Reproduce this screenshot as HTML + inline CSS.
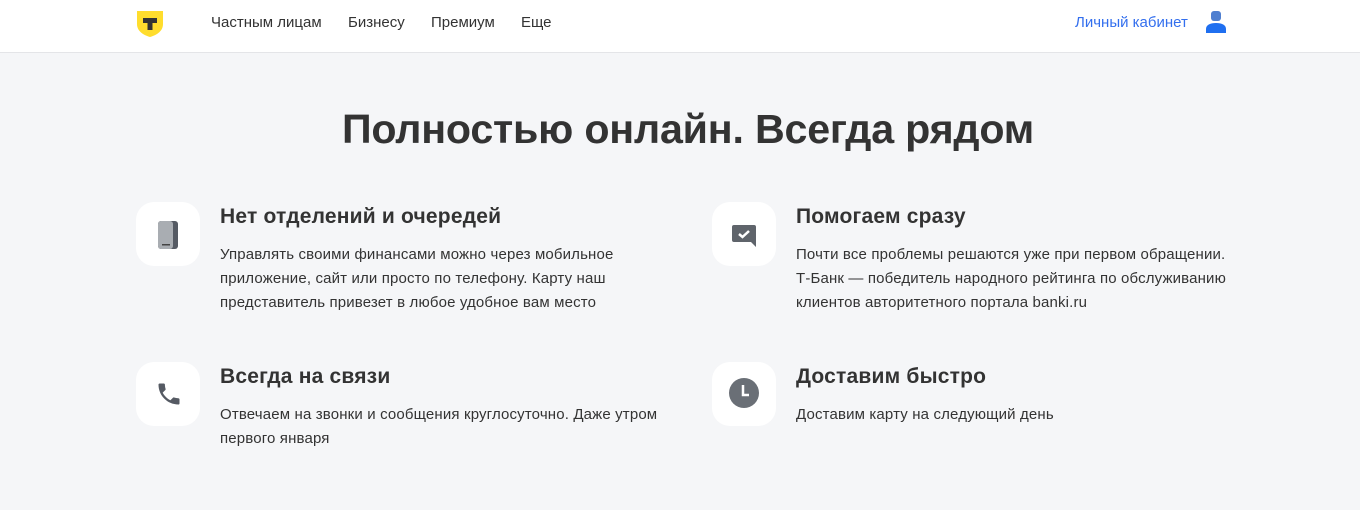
<!DOCTYPE html>
<html><head><meta charset="utf-8"><style>
*{margin:0;padding:0;box-sizing:border-box}
body{width:1360px;height:510px;background:#f5f6f8;font-family:"Liberation Sans",sans-serif;color:#333;overflow:hidden;position:relative}
.hdr{position:absolute;left:0;top:0;width:1360px;height:53px;background:#fff;border-bottom:1px solid #e4e5e8}
.nav{position:absolute;top:14px;font-size:15px;color:#333}
h1{position:absolute;top:106px;left:0;width:1376px;text-align:center;font-size:41.2px;font-weight:bold;color:#333;letter-spacing:-0.2px}
.ic{position:absolute;width:64px;height:64px;background:#fff;border-radius:18px}
.t{position:absolute;font-size:21px;font-weight:bold;color:#333;letter-spacing:0.2px}
.d{position:absolute;font-size:15px;line-height:24px;color:#333;letter-spacing:0.15px}
</style></head><body>
<div class="hdr">
<svg style="position:absolute;left:136px;top:10px" width="28" height="28" viewBox="0 0 28 28"><path d="M1 1H27V14C27 21 21 25 14 27C7 25 1 21 1 14Z" fill="#ffdd2d"/><path d="M7 8H21V13H16.5V20H11.5V13H7Z" fill="#333"/></svg>
<span class="nav" style="left:211px">Частным лицам</span>
<span class="nav" style="left:348px">Бизнесу</span>
<span class="nav" style="left:431px">Премиум</span>
<span class="nav" style="left:521px">Еще</span>
<span class="nav" style="left:1075px;color:#336fee">Личный кабинет</span>
<svg style="position:absolute;left:1206px;top:10px" width="20" height="23" viewBox="0 0 20 23"><rect x="5" y="1" width="10" height="10" rx="3" fill="#4f7fd0"/><path d="M0 23V19C0 15 4 13 10 13C16 13 20 15 20 19V23Z" fill="#1f6ff0"/></svg>
</div>
<h1>Полностью онлайн. Всегда рядом</h1>

<div class="ic" style="left:136px;top:202px"><svg style="position:absolute;left:22px;top:19px" width="20" height="28" viewBox="0 0 20 28"><rect x="0" y="0" width="20" height="28" rx="3" fill="#555a63"/><rect x="0" y="0" width="15" height="28" rx="3" fill="#a9adb2"/><rect x="4" y="23" width="8" height="1.5" fill="#444"/></svg></div>
<div class="t" style="left:220px;top:205px">Нет отделений и очередей</div>
<div class="d" style="left:220px;top:243px">Управлять своими финансами можно через мобильное<br>приложение, сайт или просто по телефону. Карту наш<br>представитель привезет в любое удобное вам место</div>

<div class="ic" style="left:712px;top:202px"><svg style="position:absolute;left:18px;top:22px" width="28" height="24" viewBox="0 0 28 24"><path d="M2 3Q2 1 4 1H24Q26 1 26 3V23L21 18H4Q2 18 2 16Z" fill="#5f646b"/><path d="M9 10L12.5 13L19 7" stroke="#fff" stroke-width="2.5" fill="none"/></svg></div>
<div class="t" style="left:796px;top:205px">Помогаем сразу</div>
<div class="d" style="left:796px;top:243px">Почти все проблемы решаются уже при первом обращении.<br>Т-Банк — победитель народного рейтинга по обслуживанию<br>клиентов авторитетного портала banki.ru</div>

<div class="ic" style="left:136px;top:362px"><svg style="position:absolute;left:19px;top:18px" width="28" height="28" viewBox="0 0 24 24"><path d="M6.6 10.8c1.4 2.8 3.8 5.1 6.6 6.6l2.2-2.2c.3-.3.7-.4 1-.2 1.1.4 2.3.6 3.6.6.6 0 1 .4 1 1V20c0 .6-.4 1-1 1C10.6 21 3 13.4 3 4c0-.6.4-1 1-1h3.5c.6 0 1 .4 1 1 0 1.3.2 2.5.6 3.6.1.3 0 .7-.2 1z" fill="#555a63"/></svg></div>
<div class="t" style="left:220px;top:365px">Всегда на связи</div>
<div class="d" style="left:220px;top:403px">Отвечаем на звонки и сообщения круглосуточно. Даже утром<br>первого января</div>

<div class="ic" style="left:712px;top:362px"><svg style="position:absolute;left:17px;top:16px" width="30" height="30" viewBox="0 0 30 30"><circle cx="15" cy="15" r="15" fill="#6a6f76"/><path d="M14 7V17H20" stroke="#fff" stroke-width="2.5" fill="none"/></svg></div>
<div class="t" style="left:796px;top:365px">Доставим быстро</div>
<div class="d" style="left:796px;top:403px">Доставим карту на следующий день</div>
</body></html>
